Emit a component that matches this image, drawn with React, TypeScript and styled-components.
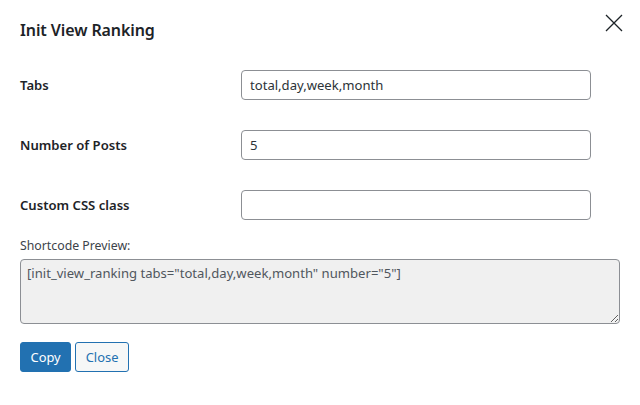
import React from "react";
import styled, { createGlobalStyle } from "styled-components";

const Global = createGlobalStyle`
  html, body { margin: 0; padding: 0; background: #fff; }
  body { font-family: "Noto Sans", "Open Sans", sans-serif; color: #1d2327; }
  * { box-sizing: border-box; }
`;

const Modal = styled.div`
  width: 640px;
  height: 405px;
  padding: 0 20px;
  background: #fff;
  display: flex;
  flex-direction: column;
`;

const Header = styled.div`
  display: flex;
  align-items: flex-start;
  justify-content: space-between;
  height: 46px;
  padding-top: 18px;
`;

const Title = styled.h1`
  margin: 0;
  font-size: 16px;
  font-weight: 600;
  line-height: 24px;
  color: #1d2327;
  letter-spacing: -0.1px;
`;

const CloseIcon = styled.button`
  width: 18px;
  height: 18px;
  padding: 0;
  margin-right: -3px;
  margin-top: -4px;
  border: 0;
  background: transparent;
  display: flex;
  align-items: center;
  justify-content: center;
  cursor: pointer;
`;

const Form = styled.div`
  display: flex;
  flex-direction: column;
  gap: 30px;
  margin-top: 24px;
`;

const Row = styled.div`
  display: grid;
  grid-template-columns: 221px 350px;
  align-items: center;
  height: 30px;
`;

const Label = styled.label`
  font-size: 13.1px;
  font-weight: 600;
  color: #1d2327;
`;

const TextInput = styled.input`
  width: 350px;
  height: 30px;
  border: 1px solid #8c8f94;
  border-radius: 4px;
  padding: 0 8px;
  font-family: inherit;
  font-size: 13.1px;
  color: #2c3338;
  background: #fff;
  outline: none;
`;

const Preview = styled.div`
  display: flex;
  flex-direction: column;
  margin-top: 17px;
`;

const PreviewLabel = styled.div`
  font-size: 12.3px;
  line-height: 18px;
  color: #3c434a;
  margin-bottom: 4px;
`;

const PreviewBox = styled.textarea`
  width: 600px;
  height: 65px;
  border: 1px solid #8c8f94;
  border-radius: 4px;
  background: #f0f0f0;
  color: #50575e;
  font-family: inherit;
  font-size: 13.1px;
  line-height: 20px;
  padding: 3px 6px;
  resize: vertical;
  outline: none;
`;

const Actions = styled.div`
  display: flex;
  gap: 4px;
  margin-top: 18px;
`;

const Button = styled.button<{ $primary?: boolean }>`
  height: 30px;
  padding: 0 9.5px;
  border-radius: 3px;
  border: 1px solid #2271b1;
  background: ${(p) => (p.$primary ? "#2271b1" : "#f6f7f7")};
  color: ${(p) => (p.$primary ? "#fff" : "#2271b1")};
  font-family: inherit;
  font-size: 12.9px;
  line-height: 28px;
  cursor: pointer;
`;

export default function App() {
  const shortcode = '[init_view_ranking tabs="total,day,week,month" number="5"]';
  return (
    <>
      <Global />
      <Modal>
        <Header>
          <Title>Init View Ranking</Title>
          <CloseIcon aria-label="Close">
            <svg width="18" height="18" viewBox="0 0 18 18">
              <path d="M1 1 L17 17 M17 1 L1 17" stroke="#1d2327" strokeWidth="1.3" fill="none" />
            </svg>
          </CloseIcon>
        </Header>
        <Form>
          <Row>
            <Label>Tabs</Label>
            <TextInput defaultValue="total,day,week,month" />
          </Row>
          <Row>
            <Label>Number of Posts</Label>
            <TextInput defaultValue="5" />
          </Row>
          <Row>
            <Label>Custom CSS class</Label>
            <TextInput defaultValue="" />
          </Row>
        </Form>
        <Preview>
          <PreviewLabel>Shortcode Preview:</PreviewLabel>
          <PreviewBox readOnly value={shortcode} />
        </Preview>
        <Actions>
          <Button $primary>Copy</Button>
          <Button>Close</Button>
        </Actions>
      </Modal>
    </>
  );
}
